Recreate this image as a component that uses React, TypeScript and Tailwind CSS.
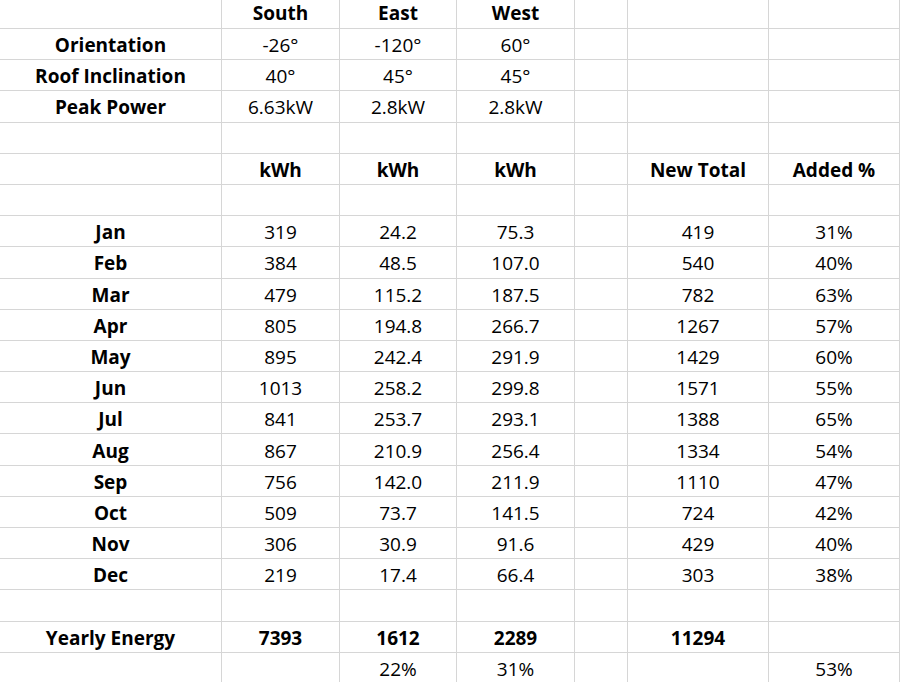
const rows: { c: string[]; b?: boolean }[] = [
  { c: ["", "South", "East", "West", "", "", ""], b: true },
  { c: ["Orientation", "-26°", "-120°", "60°", "", "", ""] },
  { c: ["Roof Inclination", "40°", "45°", "45°", "", "", ""] },
  { c: ["Peak Power", "6.63kW", "2.8kW", "2.8kW", "", "", ""] },
  { c: ["", "", "", "", "", "", ""] },
  { c: ["", "kWh", "kWh", "kWh", "", "New Total", "Added %"], b: true },
  { c: ["", "", "", "", "", "", ""] },
  { c: ["Jan", "319", "24.2", "75.3", "", "419", "31%"] },
  { c: ["Feb", "384", "48.5", "107.0", "", "540", "40%"] },
  { c: ["Mar", "479", "115.2", "187.5", "", "782", "63%"] },
  { c: ["Apr", "805", "194.8", "266.7", "", "1267", "57%"] },
  { c: ["May", "895", "242.4", "291.9", "", "1429", "60%"] },
  { c: ["Jun", "1013", "258.2", "299.8", "", "1571", "55%"] },
  { c: ["Jul", "841", "253.7", "293.1", "", "1388", "65%"] },
  { c: ["Aug", "867", "210.9", "256.4", "", "1334", "54%"] },
  { c: ["Sep", "756", "142.0", "211.9", "", "1110", "47%"] },
  { c: ["Oct", "509", "73.7", "141.5", "", "724", "42%"] },
  { c: ["Nov", "306", "30.9", "91.6", "", "429", "40%"] },
  { c: ["Dec", "219", "17.4", "66.4", "", "303", "38%"] },
  { c: ["", "", "", "", "", "", ""] },
  { c: ["Yearly Energy", "7393", "1612", "2289", "", "11294", ""], b: true },
  { c: ["", "", "22%", "31%", "", "", "53%"] },
];

export default function App() {
  return (
    <div className="w-[900px] h-[682px] overflow-hidden bg-white text-black text-[19px]" style={{ fontFamily: "'Open Sans', sans-serif" }}>
      <div className="grid grid-cols-[222px_118px_117px_118px_53px_141px_131px]">
        {rows.map((r, i) =>
          r.c.map((t, j) => (
            <div
              key={i + "-" + j}
              className={`${i === 0 ? "h-[29px] pb-[1px]" : "h-[31.2px] pt-[3px]"} border-b border-r border-[#d6d6d6] flex items-center justify-center whitespace-nowrap leading-none ${
                r.b || j === 0 ? "font-bold" : ""
              }`}
            >
              {t}
            </div>
          ))
        )}
      </div>
    </div>
  );
}
